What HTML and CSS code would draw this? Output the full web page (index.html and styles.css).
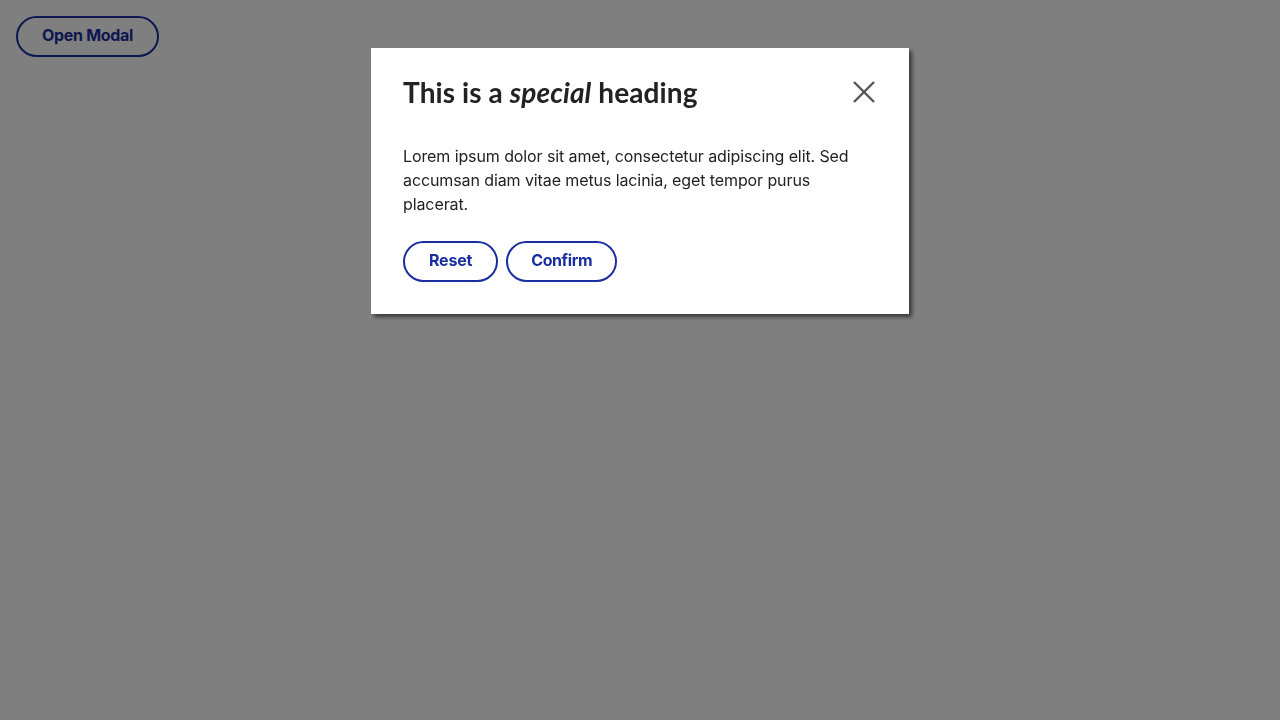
FILE: index.html
```html
<!DOCTYPE html>
<html lang="en">
<head>
<meta charset="utf-8">
<title>Modal</title>
<link rel="stylesheet" href="styles.css">
</head>
<body>
<div class="page">
  <button class="btn">Open Modal</button>
</div>
<div class="overlay">
  <div class="modal" role="dialog" aria-labelledby="mh">
    <div class="modal-header">
      <h2 id="mh" class="modal-title">This is a <em>special</em> heading</h2>
      <button class="close" aria-label="Close">
        <svg width="24" height="24" viewBox="0 0 24 24"><path d="M2 2 L22 22 M22 2 L2 22" stroke="#555" stroke-width="2.4" fill="none"/></svg>
      </button>
    </div>
    <p class="modal-text">Lorem ipsum dolor sit amet, consectetur adipiscing elit. Sed accumsan diam vitae metus lacinia, eget tempor purus placerat.</p>
    <div class="actions">
      <button class="btn">Reset</button>
      <button class="btn btn-confirm">Confirm</button>
    </div>
  </div>
</div>
</body>
</html>
```
FILE: styles.css
```css
html, body { margin: 0; padding: 0; }
body {
  background: #fff;
  font-family: Inter, "Liberation Sans", sans-serif;
  color: #222;
  width: 1280px;
  height: 720px;
  overflow: hidden;
}
.page { padding: 16px; }
.btn {
  font-family: Inter, "Liberation Sans", sans-serif;
  font-weight: 700;
  font-size: 16px;
  color: #1a2ea0;
  background: transparent;
  border: 2px solid #1a2ea0;
  border-radius: 21px;
  height: 41px;
  padding: 0 24px 3px;
  letter-spacing: -0.2px;
  cursor: pointer;
}
.page .btn { height: 41px; padding: 0 24px 3px; letter-spacing: -0.3px; }
.overlay {
  position: fixed;
  inset: 0;
  background: rgba(0, 0, 0, 0.5);
  display: flex;
  justify-content: center;
  align-items: flex-start;
  padding-top: 48px;
}
.modal {
  width: 538px;
  box-sizing: border-box;
  background: #fff;
  padding: 32px;
  box-shadow: 3px 3px 4px rgba(0, 0, 0, 0.55);
}
.modal-header {
  display: flex;
  justify-content: space-between;
  align-items: center;
  height: 24px;
}
.modal-title {
  margin: 0;
  font-family: Lato, sans-serif;
  font-size: 28px;
  font-weight: 700;
  line-height: 24px;
  letter-spacing: 0.1px;
  color: #222;
}
.modal-title em { font-style: italic; }
.close {
  background: none;
  border: 0;
  padding: 0;
  width: 24px;
  height: 24px;
  margin-right: 1px;
  display: flex;
}
.modal-text {
  margin: 40px 0 25px;
  font-size: 16px;
  line-height: 24px;
  letter-spacing: -0.1px;
  color: #222;
}
.actions { display: flex; gap: 8px; }
.actions .btn { padding: 0 24px 3px; }
.actions .btn-confirm { padding: 0 23px 3px; letter-spacing: -0.4px; }
```
